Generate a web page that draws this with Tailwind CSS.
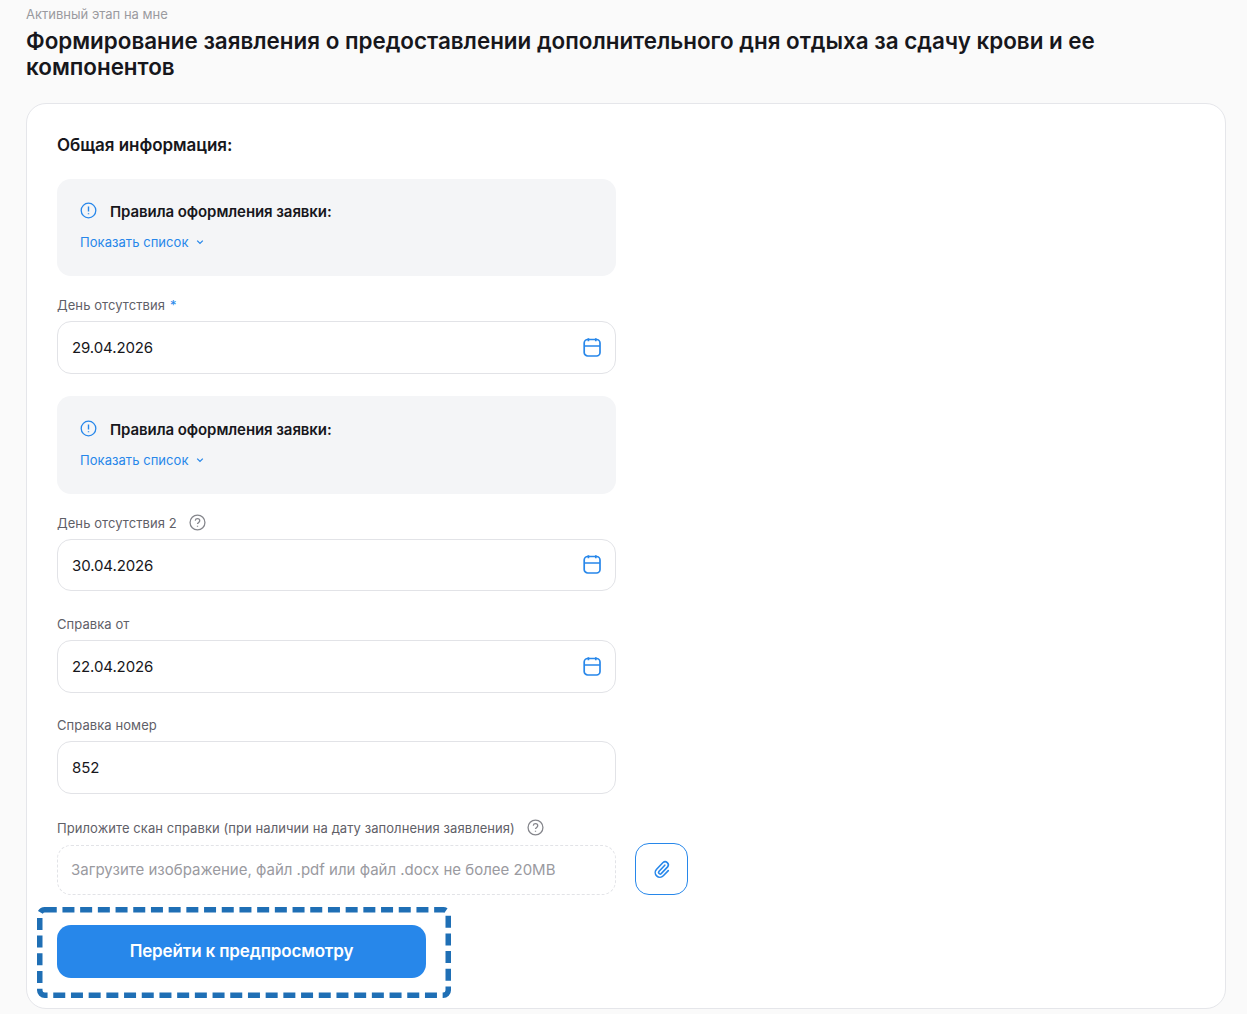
<!DOCTYPE html>
<html lang="ru">
<head>
<meta charset="utf-8">
<script src="https://cdn.jsdelivr.net/npm/@tailwindcss/browser@4"></script>
<title>Заявление</title>
</head>
<body class="bg-[#fafafa] font-[Inter,sans-serif] overflow-hidden">
<div class="h-[1014px] w-[1247px] pl-[26px] pr-[21px] pt-[7px]">
  <p class="text-[13px] leading-[14px] text-[#9a9a9f]">Активный этап на мне</p>
  <h1 class="mt-[7px] text-[22.4px] leading-[26px] font-semibold text-[#17171c]">Формирование заявления о предоставлении дополнительного дня отдыха за сдачу крови и ее компонентов</h1>
  <main class="relative mt-[23px] h-[906px] rounded-[20px] border border-[#e5e6ea] bg-white px-[30px] pt-[30px]">
    <h2 class="text-[17px] leading-[22px] font-semibold tracking-[-0.05px] text-[#17171c]">Общая информация:</h2>
    <div class="w-[559px] mt-[23px] flex flex-col">
      <section class="h-[97px] rounded-[14px] bg-[#f4f5f7] px-[23px] pt-[23px]">
        <div class="flex items-center gap-[13px]">
          <svg class="w-[17px] h-[17px] -mt-[3px] text-[#2787ea]" viewBox="0 0 17 17" fill="none" stroke="currentColor" stroke-width="1.3"><circle cx="8.5" cy="8.5" r="7.3"/><path d="M8.5 4.6v4.8M8.5 11.2v1" stroke-width="1.4"/></svg>
          <span class="text-[15px] leading-[20px] font-semibold tracking-[-0.08px] text-[#17171c]">Правила оформления заявки:</span>
        </div>
        <div class="mt-[10px] flex items-center gap-[7px] text-[#2787ea]">
          <span class="text-[13px] leading-[20px] tracking-[0.05px]">Показать список</span>
          <svg class="w-[10px] h-[10px]" viewBox="0 0 10 10" fill="none" stroke="currentColor" stroke-width="1.3"><path d="M2.2 3.6 5 6.4l2.8-2.8"/></svg>
        </div>
      </section>
      <label class="mt-[22px] flex items-center h-[16px] text-[13px] text-[#5f6068] tracking-[0.07px]">День отсутствия<span class="ml-[5px] text-[#2787ea]">*</span></label>
      <div class="mt-[7px] h-[53px] rounded-[14px] border border-[#e2e3e7] bg-white px-[14px] flex items-center justify-between">
        <span class="pt-[2px] text-[15px] tracking-[-0.1px] text-[#17171c]">29.04.2026</span>
        <svg class="w-[18px] h-[20px] text-[#2787ea]" viewBox="0 0 18 20" fill="none" stroke="currentColor" stroke-width="1.7"><rect x="1.2" y="1.5" width="15.8" height="16.5" rx="3.5"/><path d="M1.2 8h15.8M5.4 .3v3M12.8 .3v3"/></svg>
      </div>
      <section class="mt-[22px] h-[98px] rounded-[14px] bg-[#f4f5f7] px-[23px] pt-[24px]">
        <div class="flex items-center gap-[13px]">
          <svg class="w-[17px] h-[17px] -mt-[3px] text-[#2787ea]" viewBox="0 0 17 17" fill="none" stroke="currentColor" stroke-width="1.3"><circle cx="8.5" cy="8.5" r="7.3"/><path d="M8.5 4.6v4.8M8.5 11.2v1" stroke-width="1.4"/></svg>
          <span class="text-[15px] leading-[20px] font-semibold tracking-[-0.08px] text-[#17171c]">Правила оформления заявки:</span>
        </div>
        <div class="mt-[10px] flex items-center gap-[7px] text-[#2787ea]">
          <span class="text-[13px] leading-[20px] tracking-[0.05px]">Показать список</span>
          <svg class="w-[10px] h-[10px]" viewBox="0 0 10 10" fill="none" stroke="currentColor" stroke-width="1.3"><path d="M2.2 3.6 5 6.4l2.8-2.8"/></svg>
        </div>
      </section>
      <label class="mt-[22px] flex items-center h-[16px] text-[13px] text-[#5f6068] tracking-[0.07px]">День отсутствия 2
        <svg class="ml-[12px] -mt-[4px] w-[17px] h-[17px] text-[#85868c]" viewBox="0 0 16 16" fill="none" stroke="currentColor" stroke-width="1.2"><circle cx="8" cy="8" r="7"/><path d="M5.9 6.2A2.1 2.1 0 0 1 8 4.4c1.2 0 2.1.8 2.1 1.9 0 1.6-2.1 1.6-2.1 3.2M8 11v1.1"/></svg>
      </label>
      <div class="mt-[7px] h-[52px] rounded-[14px] border border-[#e2e3e7] bg-white px-[14px] flex items-center justify-between">
        <span class="pt-[2px] text-[15px] tracking-[-0.1px] text-[#17171c]">30.04.2026</span>
        <svg class="w-[18px] h-[20px] text-[#2787ea]" viewBox="0 0 18 20" fill="none" stroke="currentColor" stroke-width="1.7"><rect x="1.2" y="1.5" width="15.8" height="16.5" rx="3.5"/><path d="M1.2 8h15.8M5.4 .3v3M12.8 .3v3"/></svg>
      </div>
      <label class="mt-[26px] flex items-center h-[16px] text-[13px] text-[#5f6068] tracking-[0.07px]">Справка от</label>
      <div class="mt-[7px] h-[53px] rounded-[14px] border border-[#e2e3e7] bg-white px-[14px] flex items-center justify-between">
        <span class="pt-[2px] text-[15px] tracking-[-0.1px] text-[#17171c]">22.04.2026</span>
        <svg class="w-[18px] h-[20px] text-[#2787ea]" viewBox="0 0 18 20" fill="none" stroke="currentColor" stroke-width="1.7"><rect x="1.2" y="1.5" width="15.8" height="16.5" rx="3.5"/><path d="M1.2 8h15.8M5.4 .3v3M12.8 .3v3"/></svg>
      </div>
      <label class="mt-[25px] flex items-center h-[16px] text-[13px] text-[#5f6068] tracking-[0.07px]">Справка номер</label>
      <div class="mt-[7px] h-[53px] rounded-[14px] border border-[#e2e3e7] bg-white px-[14px] flex items-center justify-between">
        <span class="pt-[2px] text-[15px] tracking-[-0.1px] text-[#17171c]">852</span>
      </div>
      <label class="mt-[27px] flex items-center h-[16px] text-[13px] text-[#5f6068] tracking-[0.07px] whitespace-nowrap">Приложите скан справки (при наличии на дату заполнения заявления)
        <svg class="ml-[12px] -mt-[4px] w-[17px] h-[17px] text-[#85868c]" viewBox="0 0 16 16" fill="none" stroke="currentColor" stroke-width="1.2"><circle cx="8" cy="8" r="7"/><path d="M5.9 6.2A2.1 2.1 0 0 1 8 4.4c1.2 0 2.1.8 2.1 1.9 0 1.6-2.1 1.6-2.1 3.2M8 11v1.1"/></svg>
      </label>
      <div class="relative mt-[8px] h-[50px] w-full rounded-[14px] border border-dashed border-[#e2e3e7] flex items-center pl-[13px]">
        <span class="text-[15px] text-[#9a9a9f]">Загрузите изображение, файл .pdf или файл .docx не более 20MB</span>
        <button class="absolute left-[577px] top-[-3px] w-[53px] h-[52px] rounded-[14px] border border-[#2787ea] bg-white flex items-center justify-center text-[#2787ea]">
          <svg class="w-[20px] h-[20px]" viewBox="0 0 20 20" fill="none" stroke="currentColor" stroke-width="1.6" stroke-linecap="round"><path d="M12.8 6.2 6.9 12.4a1.6 1.6 0 0 0 2.3 2.2l6.4-6.7a3.2 3.2 0 0 0-4.6-4.4l-6.4 6.7a4.7 4.7 0 0 0 6.7 6.6l5-5.2"/></svg>
        </button>
      </div>
      <button class="mt-[30px] h-[53px] w-[369px] rounded-[14px] bg-[#2787ea] text-white text-[17px] tracking-[-0.15px] font-semibold">Перейти к предпросмотру</button>
    </div>
    <svg class="absolute left-[10px] top-[803px] w-[414px] h-[91px] text-[#1f6fb5]" viewBox="0 0 414 91" fill="none" stroke="currentColor" stroke-width="5.5"><rect x="2.75" y="2.75" width="408.5" height="85.5" rx="5" stroke-dasharray="12 5.7"/></svg>
  </main>
</div>
</body>
</html>
